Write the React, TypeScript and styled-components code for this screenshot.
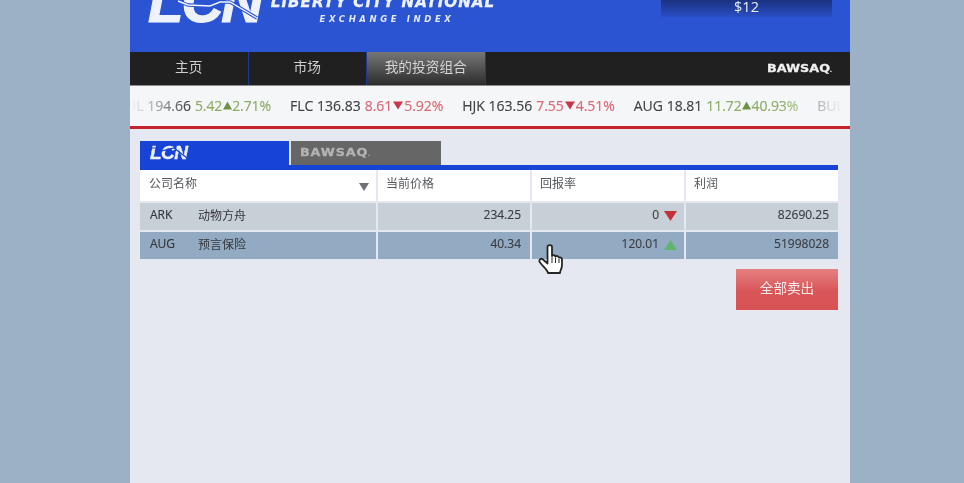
import React from "react";
import styled, { createGlobalStyle } from "styled-components";

const Global = createGlobalStyle`
  html, body { margin: 0; padding: 0; height: 100%; background: #9cb0c6; overflow: hidden; }
  #root { height: 483px; }
`;
const CJK = `"Open Sans", "Noto Sans CJK SC", sans-serif`;

const Page = styled.div`
  width: 964px; height: 483px; display: flex; padding-left: 130px; box-sizing: border-box;
  font-family: ${CJK}; filter: blur(0.45px);
`;
const Column = styled.main`
  width: 720px; height: 483px; background: #e5e8f0; display: flex; flex-direction: column; overflow: hidden;
`;
const Header = styled.header`
  height: 52px; flex: none; background: #2b54d2; display: flex; align-items: flex-start; padding: 0 18px; box-sizing: border-box; overflow: hidden; color: #fff;
`;
const Logo = styled.div`
  position: relative; width: 112px; height: 22px; flex: none; display: flex; align-items: flex-end;
`;
const LogoText = styled.span`
  font: italic 700 58px/58px "Liberation Sans", sans-serif; letter-spacing: -2px; margin-bottom: -9px; color: #eef2fb; white-space: nowrap; -webkit-text-stroke: 1.2px #eef2fb;
`;
const LogoLine = styled.svg`
  position: absolute; left: 0; top: 0; width: 112px; height: 22px;
`;
const Brand = styled.div`
  width: 224px; margin-left: 11px; flex: none; display: flex; flex-direction: column; align-items: center; margin-top: -6px;
`;
const BrandTop = styled.div`
  font: italic 700 15.2px/17px "DejaVu Sans", sans-serif; letter-spacing: 0.95px; white-space: nowrap; color: #eef2fb; -webkit-text-stroke: 0.3px #eef2fb;
`;
const BrandSub = styled.div`
  font: italic 700 8.5px/12px "DejaVu Sans", sans-serif; letter-spacing: 3.6px; white-space: nowrap; margin: 2px 0 0 8px; color: #e2e8f8;
`;
const Balance = styled.div`
  margin-left: auto; width: 171px; height: 17px; background: linear-gradient(#1b3181, #2a4ec4); text-align: center; color: #e8ecf6; font-size: 14.5px; line-height: 13px;
`;
const Nav = styled.nav`
  height: 34px; flex: none; background: #202020; display: flex; box-sizing: border-box; border-bottom: 1px solid #8b8d90;
`;
const NavItem = styled.div<{ $active?: boolean }>`
  width: 118.5px; box-sizing: border-box; border-right: 1px solid #1d3a92; text-align: center; font-size: 13.7px; line-height: 29px;
  color: ${p => (p.$active ? "#d4d4d4" : "#cfcfcf")};
  background: ${p => (p.$active ? "linear-gradient(#777, #2c2c2c)" : "none")};
`;
const BawsaqMark = styled.span<{ $small?: boolean }>`
  font: 700 11px/12px "DejaVu Sans", sans-serif; letter-spacing: ${p => (p.$small ? "0.75px" : "0")}; white-space: nowrap;
  color: ${p => (p.$small ? "#b4b4b4" : "#f0f0f0")}; transform: scaleX(1.16); transform-origin: left center; -webkit-text-stroke: 0.3px currentColor;
`;
const MarkDot = styled.span`
  font-size: 6px; margin-left: -0.5px; -webkit-text-stroke: 0;
`;
const NavRight = styled.div`
  margin-left: auto; width: 83px; display: flex; align-items: center; padding-top: 1px;
`;
const Ticker = styled.div`
  height: 40px; flex: none; position: relative; background: #f5f6f8; display: flex; align-items: center; overflow: hidden; white-space: nowrap;
  font-size: 14px; font-weight: 500; letter-spacing: 0;
`;
const TickerTrack = styled.div`
  display: flex; gap: 19px; margin-left: -13px; padding-bottom: 1px;
`;
const Quote = styled.span`
  color: #404246; display: inline-flex; gap: 4px; align-items: center; -webkit-text-stroke: 0.15px currentColor;
`;
const Delta = styled.span<{ $up: boolean }>`
  color: ${p => (p.$up ? "#8fab66" : "#dc6875")}; display: inline-flex; align-items: center;
  gap: ${p => (p.$up ? "0.5px" : "1px")}; letter-spacing: ${p => (p.$up ? "-0.1px" : "-0.05px")};
`;
const Fade = styled.div<{ $right?: boolean }>`
  position: absolute; top: 0; bottom: 0; width: ${p => (p.$right ? "72px" : "60px")}; ${p => (p.$right ? "right: 0;" : "left: 0;")}
  background: linear-gradient(${p => (p.$right ? "to left" : "to right")}, #f5f6f8 ${p => (p.$right ? "10%" : "0%")}, rgba(245,246,248,0));
`;
const RedRule = styled.div`
  height: 3px; flex: none; background: #c5242f;
`;
const Content = styled.section`
  flex: 1; padding: 12px 12px 0 10px; display: flex; flex-direction: column; position: relative;
`;
const Tabs = styled.div`
  display: flex; height: 24px; gap: 2px;
`;
const Tab = styled.div<{ $active?: boolean }>`
  width: ${p => (p.$active ? "149px" : "150px")}; box-sizing: border-box; display: flex; align-items: center; padding-left: ${p => (p.$active ? "10px" : "9px")}; position: relative;
  background: ${p => (p.$active ? "#1743d6" : "#666")};
`;
const TabLogo = styled.span`
  font: italic 700 19px/20px "Liberation Sans", sans-serif; color: #eaf0fc; letter-spacing: -0.5px; -webkit-text-stroke: 0.4px #eaf0fc;
`;
const TabLine = styled.svg`
  position: absolute; left: 10px; top: 4px; width: 38px; height: 15px;
`;
const BlueBar = styled.div`
  height: 5px; background: #1743d6;
`;
const Grid = styled.div`
  display: grid; grid-template-columns: 236px 152px 152px 152px; column-gap: 2px;
`;
const HeadCell = styled.div`
  background: #fff; height: 31px; box-sizing: border-box; padding: 0 8px 6px; display: flex; align-items: center; justify-content: space-between;
  font-size: 12px; color: #55585c;
  &:first-child { padding-left: 9px; }
`;
const Caret = styled.span`
  width: 0; height: 0; border-left: 5px solid transparent; border-right: 5px solid transparent; border-top: 8px solid #6e7175; margin-top: 8px; margin-right: -1px;
`;
const Row = styled(Grid)<{ $tone: "light" | "blue" }>`
  margin-top: 2px;
  & > div { background: ${p => (p.$tone === "light" ? "#c8d0d7" : "#93abc2")}; height: 27px; }
`;
const NameCell = styled.div`
  display: flex; align-items: center; padding: 0 0 4px 10px; font-size: 12px; color: #34373b; box-sizing: border-box;
`;
const Symbol = styled.span`
  width: 48px; font-weight: 500; -webkit-text-stroke: 0.15px currentColor;
`;
const NumCell = styled.div`
  display: flex; align-items: center; justify-content: flex-end; padding: 0 9px 4px 0; gap: 4px; font-size: 12px; font-weight: 500; color: #3a3d42; box-sizing: border-box; -webkit-text-stroke: 0.15px currentColor;
`;
const Arrow = styled.svg`
  width: 13px; height: 10px; margin-top: 3px; margin-right: -2px; margin-left: 1px;
`;
const Actions = styled.div`
  display: flex; justify-content: flex-end; margin-top: 10px;
`;
const SellButton = styled.button`
  width: 102px; height: 41px; border: 0; padding: 0 0 6px; background: linear-gradient(#e58082, #d85558 55%, #d75254); color: #f8e8e8;
  font-family: ${CJK}; font-size: 13.6px;
`;
const Cursor = styled.svg`
  position: absolute; left: 408px; top: 115px; width: 26px; height: 31px;
`;

const Tri = ({ up, color }: { up: boolean; color: string }) => (
  <svg width={up ? 9 : 10} height={9} viewBox="0 0 10 9" preserveAspectRatio="none">
    <path d={up ? "M5 0.5 L10 8.5 L0 8.5Z" : "M0 0.5 L10 0.5 L5 8.5Z"} fill={color} />
  </svg>
);

const quotes = [
  { s: "BUL", p: "194.66", d: "5.42", pct: "2.71%", up: true },
  { s: "FLC", p: "136.83", d: "8.61", pct: "5.92%", up: false },
  { s: "HJK", p: "163.56", d: "7.55", pct: "4.51%", up: false },
  { s: "AUG", p: "18.81", d: "11.72", pct: "40.93%", up: true },
];

const Mark = ({ small }: { small?: boolean }) => (
  <BawsaqMark $small={small}>BAWSAQ<MarkDot>.</MarkDot></BawsaqMark>
);

export default function App() {
  return (
    <Page>
      <Global />
      <Column>
        <Header>
          <Logo>
            <LogoText>LCN</LogoText>
            <LogoLine viewBox="0 0 112 22">
              <path d="M30 1 L40 5 L62 6 L72 2 L82 2 L109 18" fill="none" stroke="#2b54d2" strokeWidth="3.4" />
              <path d="M30 1 L40 5 L62 6 L72 2 L82 2 L109 18" fill="none" stroke="#eef2fb" strokeWidth="1.4" />
            </LogoLine>
          </Logo>
          <Brand>
            <BrandTop>LIBERTY CITY NATIONAL</BrandTop>
            <BrandSub>EXCHANGE INDEX</BrandSub>
          </Brand>
          <Balance>$12</Balance>
        </Header>
        <Nav>
          <NavItem>主页</NavItem>
          <NavItem>市场</NavItem>
          <NavItem $active>我的投资组合</NavItem>
          <NavRight><Mark /></NavRight>
        </Nav>
        <Ticker>
          <TickerTrack>
            {quotes.map(q => (
              <Quote key={q.s}>
                {q.s} {q.p}
                <Delta $up={q.up}>
                  {q.d}
                  <Tri up={q.up} color={q.up ? "#6f9147" : "#c9384a"} />
                  {q.pct}
                </Delta>
              </Quote>
            ))}
            <Quote>BUL</Quote>
          </TickerTrack>
          <Fade />
          <Fade $right />
        </Ticker>
        <RedRule />
        <Content>
          <Tabs>
            <Tab $active>
              <TabLogo>LCN</TabLogo>
              <TabLine viewBox="0 0 38 15">
                <path d="M0 3 H6 L11 6 L24 3 L37 13" fill="none" stroke="#1743d6" strokeWidth="1.2" />
              </TabLine>
            </Tab>
            <Tab><Mark small /></Tab>
          </Tabs>
          <BlueBar />
          <Grid>
            <HeadCell>公司名称<Caret /></HeadCell>
            <HeadCell>当前价格</HeadCell>
            <HeadCell>回报率</HeadCell>
            <HeadCell>利润</HeadCell>
          </Grid>
          <Row $tone="light">
            <NameCell><Symbol>ARK</Symbol>动物方舟</NameCell>
            <NumCell>234.25</NumCell>
            <NumCell>0
              <Arrow viewBox="0 0 13 10"><path d="M0 0 H13 L6.5 10Z" fill="#c5303c" /></Arrow>
            </NumCell>
            <NumCell>82690.25</NumCell>
          </Row>
          <Row $tone="blue">
            <NameCell><Symbol>AUG</Symbol>预言保险</NameCell>
            <NumCell>40.34</NumCell>
            <NumCell>120.01
              <Arrow viewBox="0 0 13 10"><path d="M6.5 0 L13 10 H0Z" fill="#5fb56d" /></Arrow>
            </NumCell>
            <NumCell>51998028</NumCell>
          </Row>
          <Actions><SellButton>全部卖出</SellButton></Actions>
          <Cursor viewBox="0 0 26 31">
            <path
              d="M9.5 3 C9.5 0.5 14 0.5 14 3 V12 C15 10.8 17 11 17.5 12.5 C18.5 11.6 20.5 12 21 13.7 C22 13 24 13.6 24 15.5 V21 C24 25 22 26.5 22 29 H10 C9.5 26 6 23.5 2 18.5 C0.3 16.3 2.8 13.6 5 15.5 L9.5 19.5 Z"
              fill="#fff" stroke="#262626" strokeWidth="1.8" strokeLinejoin="round"
            />
            <path d="M14 13 V19 M17.5 13.5 V19 M21 15 V19" stroke="#262626" strokeWidth="1" fill="none" />
          </Cursor>
        </Content>
      </Column>
    </Page>
  );
}
